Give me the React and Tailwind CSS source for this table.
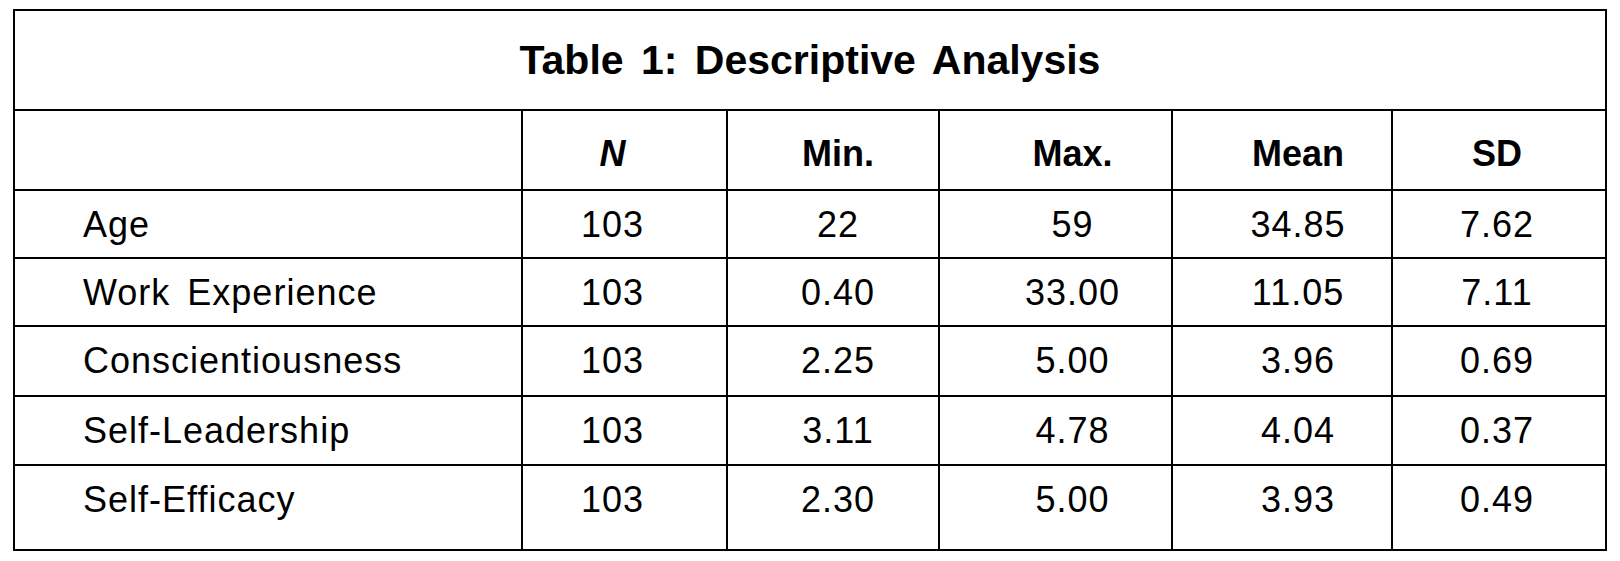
import React from 'react';

const rows = [
  { label: 'Age', n: '103', min: '22', max: '59', mean: '34.85', sd: '7.62', h: 'h-[68px]' },
  { label: 'Work Experience', n: '103', min: '0.40', max: '33.00', mean: '11.05', sd: '7.11', h: 'h-[68px]' },
  { label: 'Conscientiousness', n: '103', min: '2.25', max: '5.00', mean: '3.96', sd: '0.69', h: 'h-[70px]' },
  { label: 'Self-Leadership', n: '103', min: '3.11', max: '4.78', mean: '4.04', sd: '0.37', h: 'h-[69px]' },
  { label: 'Self-Efficacy', n: '103', min: '2.30', max: '5.00', mean: '3.93', sd: '0.49', h: 'h-[83px]' },
];

const gridCols = 'grid grid-cols-[508px_205px_212px_233px_220px_212px]';

function App() {
  return (
    <div className="w-[1620px] h-[561px] bg-white pt-[9px] pl-[13px]" style={{ fontFamily: '"Liberation Sans", Arial, sans-serif' }}>
      <div className="w-[1594px] border-2 border-black text-black">
        <div className="h-[100px] border-b-2 border-black flex items-center justify-center">
          <h1 className="text-[41px] font-bold [word-spacing:6px] pt-[2px]">Table 1: Descriptive Analysis</h1>
        </div>

        <div className={`${gridCols} h-[80px] border-b-2 border-black text-[36px] font-bold`}>
          <div className="border-r-2 border-black" />
          <div className="border-r-2 border-black flex items-center justify-center pr-6 pt-[8px] italic">N</div>
          <div className="border-r-2 border-black flex items-center justify-center pl-[10px] pt-[8px]">Min.</div>
          <div className="border-r-2 border-black flex items-center justify-center pl-[34px] pt-[8px]">Max.</div>
          <div className="border-r-2 border-black flex items-center justify-center pl-[32px] pt-[8px]">Mean</div>
          <div className="flex items-center justify-center pr-[4px] pt-[8px]">SD</div>
        </div>

        {rows.map((row, i) => (
          <div key={row.label} className={`${gridCols} ${row.h} ${i < rows.length - 1 ? 'border-b-2 border-black' : ''} text-[36px] tracking-[1px]`}>
            <div className="border-r-2 border-black">
              <div className="h-[67px] flex items-center pl-[68px] [word-spacing:6px]">{row.label}</div>
            </div>
            <div className="border-r-2 border-black">
              <div className="h-[67px] flex items-center justify-center pr-6">{row.n}</div>
            </div>
            <div className="border-r-2 border-black">
              <div className="h-[67px] flex items-center justify-center pl-[10px]">{row.min}</div>
            </div>
            <div className="border-r-2 border-black">
              <div className="h-[67px] flex items-center justify-center pl-[34px]">{row.max}</div>
            </div>
            <div className="border-r-2 border-black">
              <div className="h-[67px] flex items-center justify-center pl-[32px]">{row.mean}</div>
            </div>
            <div>
              <div className="h-[67px] flex items-center justify-center pr-[4px]">{row.sd}</div>
            </div>
          </div>
        ))}
      </div>
    </div>
  );
}

export default App;
